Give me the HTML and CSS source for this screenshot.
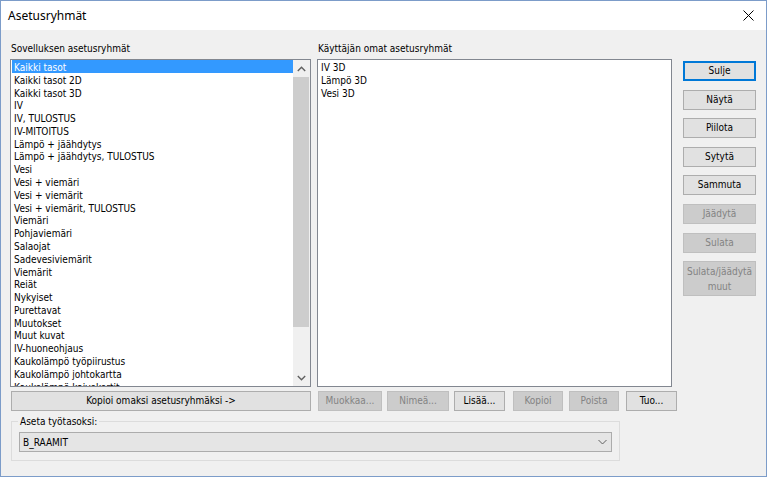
FILE: index.html
```html
<!DOCTYPE html>
<html lang="fi">
<head>
<meta charset="utf-8">
<title>Asetusryhmät</title>
<link rel="stylesheet" href="styles.css">
</head>
<body>
<div class="window">
  <div class="titlebar">
    <span class="title">Asetusryhmät</span>
    <svg class="close" width="11" height="11" viewBox="0 0 11 11"><path d="M0.5 0.5 L10.5 10.5 M10.5 0.5 L0.5 10.5" stroke="#000" stroke-width="1" fill="none"/></svg>
  </div>
  <div class="content">
    <div class="main">
      <div class="col col-left">
        <div class="label">Sovelluksen asetusryhmät</div>
        <div class="listbox listbox-left">
          <div class="items">
            <div class="item selected">Kaikki tasot</div>
            <div class="item">Kaikki tasot 2D</div>
            <div class="item">Kaikki tasot 3D</div>
            <div class="item">IV</div>
            <div class="item">IV, TULOSTUS</div>
            <div class="item">IV-MITOITUS</div>
            <div class="item">Lämpö + jäähdytys</div>
            <div class="item">Lämpö + jäähdytys, TULOSTUS</div>
            <div class="item">Vesi</div>
            <div class="item">Vesi + viemäri</div>
            <div class="item">Vesi + viemärit</div>
            <div class="item">Vesi + viemärit, TULOSTUS</div>
            <div class="item">Viemäri</div>
            <div class="item">Pohjaviemäri</div>
            <div class="item">Salaojat</div>
            <div class="item">Sadevesiviemärit</div>
            <div class="item">Viemärit</div>
            <div class="item">Reiät</div>
            <div class="item">Nykyiset</div>
            <div class="item">Purettavat</div>
            <div class="item">Muutokset</div>
            <div class="item">Muut kuvat</div>
            <div class="item">IV-huoneohjaus</div>
            <div class="item">Kaukolämpö työpiirustus</div>
            <div class="item">Kaukolämpö johtokartta</div>
            <div class="item">Kaukolämpö kaivokortit</div>
          </div>
          <div class="scrollbar">
            <div class="sb-arrow">
              <svg width="9" height="6" viewBox="0 0 9 6"><path d="M0.8 5 L4.5 1.3 L8.2 5" stroke="#606060" stroke-width="1.4" fill="none"/></svg>
            </div>
            <div class="sb-track"><div class="sb-thumb"></div></div>
            <div class="sb-arrow">
              <svg width="9" height="6" viewBox="0 0 9 6"><path d="M0.8 1 L4.5 4.7 L8.2 1" stroke="#606060" stroke-width="1.4" fill="none"/></svg>
            </div>
          </div>
        </div>
        <button class="btn btn-copy">Kopioi omaksi asetusryhmäksi -&gt;</button>
      </div>
      <div class="col col-mid">
        <div class="label">Käyttäjän omat asetusryhmät</div>
        <div class="listbox listbox-right">
          <div class="items">
            <div class="item">IV 3D</div>
            <div class="item">Lämpö 3D</div>
            <div class="item">Vesi 3D</div>
          </div>
        </div>
        <div class="btnrow">
          <button class="btn b-muokkaa" disabled>Muokkaa...</button>
          <button class="btn b-nimea" disabled>Nimeä...</button>
          <button class="btn b-lisaa">Lisää...</button>
          <button class="btn b-kopioi" disabled>Kopioi</button>
          <button class="btn b-poista" disabled>Poista</button>
          <button class="btn b-tuo">Tuo...</button>
        </div>
      </div>
      <div class="col col-right">
        <button class="btn default">Sulje</button>
        <button class="btn">Näytä</button>
        <button class="btn">Piilota</button>
        <button class="btn">Sytytä</button>
        <button class="btn">Sammuta</button>
        <button class="btn" disabled>Jäädytä</button>
        <button class="btn" disabled>Sulata</button>
        <button class="btn tall" disabled>Sulata/jäädytä<br>muut</button>
      </div>
    </div>
    <fieldset class="group">
      <legend>Aseta työtasoksi:</legend>
      <div class="combo">
        <span class="combo-text">B_RAAMIT</span>
        <svg width="9" height="6" viewBox="0 0 9 6"><path d="M0.5 1 L4.5 5 L8.5 1" stroke="#606060" stroke-width="1" fill="none"/></svg>
      </div>
    </fieldset>
  </div>
</div>
</body>
</html>
```
FILE: styles.css
```css
* { box-sizing: border-box; }

body {
  margin: 0;
  background: #f0f0f0;
}

.window {
  width: 767px;
  height: 477px;
  border: 1px solid #7c9cc9;
  background: #f0f0f0;
  font-family: "DejaVu Sans Condensed", "DejaVu Sans", sans-serif;
  font-stretch: condensed;
  font-size: 10px;
  color: #000;
  overflow: hidden;
  display: flex;
  flex-direction: column;
}

.titlebar {
  height: 29px;
  flex: none;
  background: #fff;
  display: flex;
  align-items: center;
  justify-content: space-between;
  padding: 0 12px 0 7px;
}

.title {
  font-family: "Noto Sans", "Liberation Sans", sans-serif;
  font-size: 12px;
  color: #000;
}

.close { display: block; margin-top: -1px; }

.content {
  padding: 12px 0 0 9px;
}

.main {
  display: flex;
  align-items: flex-start;
}

.col { display: flex; flex-direction: column; }

.col-left { width: 301px; }
.col-mid { width: 355px; margin-left: 6px; }
.col-right {
  width: 73px;
  margin-left: 11px;
  padding-top: 19px;
  gap: 8.6px;
}

.label {
  height: 13px;
  line-height: 13px;
  padding-left: 1px;
  margin-bottom: 4px;
  white-space: nowrap;
}

.listbox {
  height: 328px;
  border: 1px solid #828790;
  background: #fff;
  display: flex;
  overflow: hidden;
}

.items {
  flex: 1;
  overflow: hidden;
}

.listbox-left .items { padding-left: 1px; }

.item {
  height: 12.79px;
  line-height: 12.79px;
  padding: 2px 0 0 2px;
  white-space: nowrap;
}

.listbox-right .item { padding-left: 3px; }

.item.selected {
  background: #3399ff;
  color: #fff;
}

.scrollbar {
  width: 17px;
  flex: none;
  background: #f0f0f0;
  display: flex;
  flex-direction: column;
}

.sb-arrow {
  height: 17px;
  flex: none;
  display: flex;
  align-items: center;
  justify-content: center;
}

.sb-arrow svg { display: block; }

.sb-track {
  flex: 1;
  padding: 0 1px 0 0;
}

.sb-thumb {
  height: 250px;
  background: #cdcdcd;
}

.btn {
  font-family: inherit;
  font-stretch: inherit;
  font-size: 10px;
  height: 20px;
  margin: 0;
  padding: 0;
  border: 1px solid #adadad;
  background: #e1e1e1;
  color: #000;
  line-height: 16px;
  text-align: center;
  border-radius: 0;
  white-space: nowrap;
}

.btn:disabled {
  background: #cccccc;
  border-color: #bfbfbf;
  color: #838383;
}

.btn.default {
  border-color: #0078d7;
  box-shadow: inset 0 0 0 1px #0078d7;
}

.btn.tall {
  height: 35px;
  line-height: 15px;
}

.btn-copy {
  width: 300px;
  margin-top: 4px;
  margin-left: 1px;
}

.btnrow {
  display: flex;
  margin-top: 4px;
  width: 370px;
}

.b-muokkaa { width: 64px; margin-left: 1px; }
.b-nimea { width: 62px; margin-left: 5px; }
.b-lisaa { width: 51px; margin-left: 5px; }
.b-kopioi { width: 50px; margin-left: 8px; }
.b-poista { width: 50px; margin-left: 6px; }
.b-tuo { width: 51px; margin-left: 7px; }

.group {
  width: 609px;
  margin: 4px 0 0 1px;
  padding: 0 7px 8px;
  border: 1px solid #dcdcdc;
  min-inline-size: 0;
}

.group legend {
  padding: 0 2px;
  margin-left: -1px;
  height: 13px;
  line-height: 13px;
}

.combo {
  margin-top: 4px;
  height: 20px;
  border: 1px solid #acacac;
  background: #e5e5e5;
  display: flex;
  align-items: center;
  justify-content: space-between;
  padding: 0 4px 0 3px;
}

.combo svg { display: block; }
```
